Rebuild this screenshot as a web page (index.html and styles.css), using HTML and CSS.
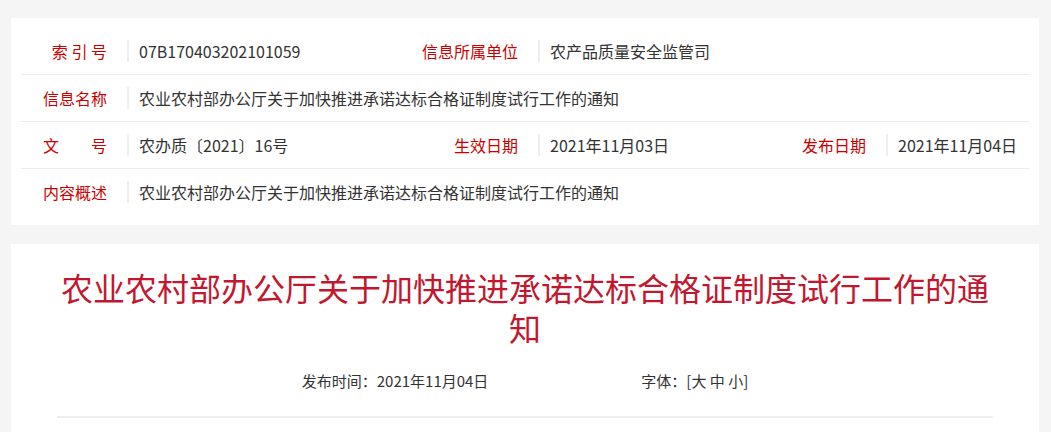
FILE: index.html
```
<!DOCTYPE html>
<html lang="zh-CN">
<head>
<meta charset="utf-8">
<title>农业农村部办公厅关于加快推进承诺达标合格证制度试行工作的通知</title>
<link rel="stylesheet" href="styles.css">
</head>
<body>
<div class="page">
  <section class="card info">
    <div class="row">
      <div class="label">索 引 号</div>
      <div class="value"><span class="v">07B170403202101059</span></div>
      <div class="label">信息所属单位</div>
      <div class="value span3"><span class="v">农产品质量安全监管司</span></div>
    </div>
    <div class="row">
      <div class="label">信息名称</div>
      <div class="value span5"><span class="v">农业农村部办公厅关于加快推进承诺达标合格证制度试行工作的通知</span></div>
    </div>
    <div class="row">
      <div class="label">文&#12288;&#12288;号</div>
      <div class="value"><span class="v">农办质〔2021〕16号</span></div>
      <div class="label">生效日期</div>
      <div class="value"><span class="v">2021年11月03日</span></div>
      <div class="label">发布日期</div>
      <div class="value"><span class="v">2021年11月04日</span></div>
    </div>
    <div class="row">
      <div class="label">内容概述</div>
      <div class="value span5"><span class="v">农业农村部办公厅关于加快推进承诺达标合格证制度试行工作的通知</span></div>
    </div>
  </section>

  <section class="card article">
    <h1 class="title">农业农村部办公厅关于加快推进承诺达标合格证制度试行工作的通知</h1>
    <div class="meta">
      <span>发布时间：2021年11月04日</span>
      <span>字体：[大 中 小]</span>
    </div>
  </section>
</div>
</body>
</html>
```

FILE: styles.css
```
html, body {
  margin: 0;
  padding: 0;
  background: #f5f5f5;
}

body {
  font-family: "Noto Sans CJK SC", "Noto Sans", sans-serif;
  color: #333;
}

.page {
  padding: 18px 12px 0 11px;
}

.card {
  background: #fff;
}

.info {
  padding: 10px;
}

.row {
  display: grid;
  grid-template-columns: 106px 294px 117px 242px 106px 1fr;
  height: 46px;
  align-items: center;
  border-bottom: 1px solid #ececec;
}

.row:last-child {
  border-bottom: none;
}

.label {
  text-align: right;
  padding-right: 20px;
  font-size: 16px;
  color: #cc0000;
  white-space: nowrap;
}

.value {
  font-size: 16px;
  white-space: nowrap;
}

.value .v {
  display: block;
  border-left: 2px solid #eeeeee;
  padding-left: 10px;
  line-height: 22px;
  color: #333;
}

.span3 { grid-column: span 3; }
.span5 { grid-column: span 5; }

.article {
  margin-top: 19px;
  padding: 23px 46px 20px;
}

.title {
  margin: 0;
  font-size: 32px;
  line-height: 40px;
  font-weight: 400;
  color: #c3172f;
  text-align: center;
}

.meta {
  margin-top: 22px;
  display: flex;
  justify-content: center;
  gap: 153px;
  font-size: 15px;
  line-height: 24px;
  color: #333;
  padding-bottom: 23px;
  border-bottom: 2px solid #eeeeee;
}
```
